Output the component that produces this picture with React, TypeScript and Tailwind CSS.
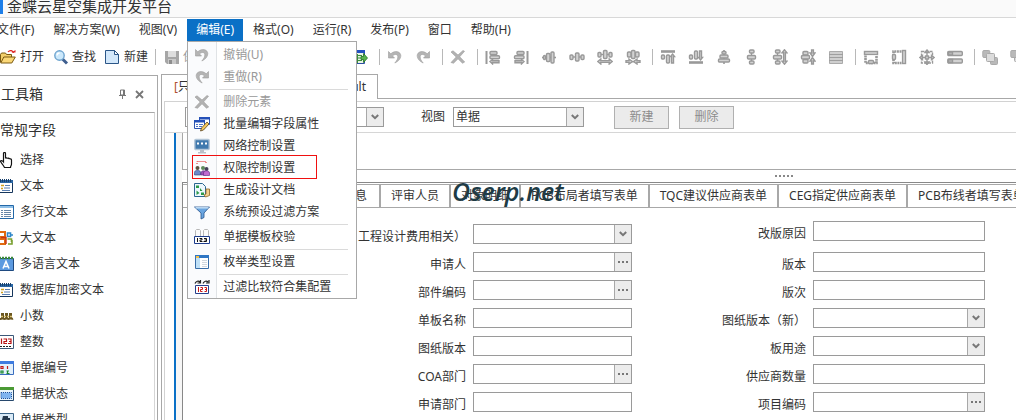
import type { ReactNode } from "react";
import clsx from "clsx";

function Svg({ children, size = 16 }: { children: ReactNode; size?: number }) {
  return (
    <svg width={size} height={size} viewBox="0 0 16 16" fill="none" className="shrink-0" aria-hidden="true">
      {children}
    </svg>
  );
}

const undoShape = (
  <g fill="#b4b4b4" stroke="#9c9c9c" strokeWidth="0.6">
    <path d="M1.500 2.500v6.500h6L5.600 7C7.500 4.800 10.600 5 10.800 7.600c.2 2.200-1 4-3 6.400 3.600-1.600 6-4.200 6-7.400C13.700 2.600 8 .8 3.800 4.800z" />
  </g>
);
const undoIcon = <Svg>{undoShape}</Svg>;
const redoIcon = (
  <Svg>
    <g transform="matrix(-1 0 0 1 16 0)">{undoShape}</g>
  </Svg>
);
const deleteIcon = (
  <Svg>
    <path d="M1 3l2-1.200L8 6l5-4.500 1.500.8L9.700 7.800l5 5.200-2.200 1.200L8 9.800 3.500 14.200 1 13.500 6.200 8z" fill="#b2b2b2" stroke="#9a9a9a" strokeWidth="0.6" />
  </Svg>
);

const openIcon = (
  <Svg>
    <path d="M.5 13.500V5.500l1-1.500h4l1 1.500h5V8" fill="#f3cf6b" stroke="#7b5a12" />
    <path d="M.8 14l3-6h11.500l-3.500 6z" fill="#fbd878" stroke="#7b5a12" />
    <path d="M8 3c2-2.500 5-1.500 5.500 1" stroke="#d22" strokeWidth="1.200" />
    <path d="M11.500 3.500h4V1z" fill="#d22" />
  </Svg>
);
const findIcon = (
  <Svg>
    <path d="M9.500 10l4.500 4.500" stroke="#3f5f8f" strokeWidth="3" />
    <circle cx="6.500" cy="6.500" r="4.700" fill="#cbe8fb" stroke="#6ea4cf" strokeWidth="1.400" />
    <path d="M4 6.500c.2-1.500 1.200-2.400 2.600-2.500" stroke="#fff" strokeWidth="1.300" />
  </Svg>
);
const newIcon = (
  <Svg>
    <path d="M1.500 1.500h9l4 4v9h-13z" fill="#d3e8fb" stroke="#2b5688" />
    <path d="M10.500 1.500v4h4z" fill="#fff" stroke="#2b5688" />
  </Svg>
);
const saveIcon = (
  <Svg>
    <path d="M1 2h14v13H3l-2-2z" fill="#a6a6a6" />
    <path d="M4 2h8v6H4z" fill="#dedede" />
    <path d="M4 10h8v5H4z" fill="#c9c9c9" />
    <path d="M5 11h3v4H5z" fill="#8e8e8e" />
  </Svg>
);
const exportIcon = (
  <Svg>
    <path d="M.5 1.500h12v13H.5z" fill="#e8f3e4" stroke="#2d4fa3" />
    <path d="M0 1h13v3H0z" fill="#2450c0" />
    <path d="M2 6.500h8M2 9h8M2 11.500h8M5.500 5v9" stroke="#3c8c3c" />
    <path d="M9 7.500h2.500V4.500l4 4.500-4 4.500v-3H9z" fill="#57b34d" stroke="#1f6e22" strokeWidth="0.8" />
  </Svg>
);

// Greyed-out layout icons share one fill and stroke
function Grey({ children }: { children: ReactNode }) {
  return (
    <Svg>
      <g fill="#d2d2d2" stroke="#999" strokeWidth="1.400">{children}</g>
    </Svg>
  );
}
const leftShape = (
  <>
    <path d="M1.500 2v13" strokeWidth="2" />
    <rect x="5" y="2.500" width="7" height="3" rx="1" />
    <rect x="5" y="6.700" width="9.500" height="3" rx="1" />
    <path d="M5 12.500l2.500-2v1.200h6.500v2H7.500v1.200z" />
  </>
);
const topShape = (
  <>
    <path d="M1 2.500h14" strokeWidth="2.600" />
    <rect x="1.500" y="6" width="3" height="4" rx="1" />
    <rect x="6.500" y="6" width="3" height="8" rx="1" />
    <path d="M12.500 5l2 2.500h-1V14h-2V7.500h-1z" />
  </>
);
const threeShape = (
  <>
    <path d="M1 5.500h14" />
    <rect x="1" y="3.500" width="3" height="4.500" rx="1" />
    <rect x="6.500" y="1.500" width="3.500" height="8" rx="1" />
    <rect x="12" y="3.500" width="3" height="4.500" rx="1" />
  </>
);
const wideShape = (
  <>
    {threeShape}
    <path d="M.8 12.500l3-2.500v1.600h8.400V10l3 2.500-3 2.500v-1.600H3.800V15z" />
  </>
);
const narrowShape = (
  <>
    <path d="M2 5.500h12" />
    <rect x="2.500" y="3" width="3.500" height="5" rx="1" />
    <rect x="6.500" y="1.500" width="3.500" height="8" rx="1" />
    <rect x="10.500" y="3" width="3.500" height="5" rx="1" />
    <path d="M7.500 12.500L4 10v1.600H1v1.800h3V15zM8.500 12.500L12 10v1.600h3v1.800h-3V15z" />
  </>
);

const alignIcons = [
  <Grey>{leftShape}</Grey>,
  <Grey><g transform="matrix(-1 0 0 1 16 0)">{leftShape}</g></Grey>,
  <Grey>
    <path d="M1 8.500h14" strokeWidth="1.600" />
    <rect x="2.500" y="6.500" width="2" height="4" rx="1" />
    <rect x="5.500" y="4.500" width="3.500" height="8" rx="1" />
    <rect x="10" y="3" width="3" height="11" rx="1" />
  </Grey>,
  <Grey><g transform="translate(0 2.500)">{threeShape}</g></Grey>,
  <Grey>{wideShape}</Grey>,
  <Grey>{narrowShape}</Grey>,
];
const spacingIcons = [
  <Grey>{topShape}</Grey>,
  <Grey><g transform="matrix(1 0 0 -1 0 16)">{topShape}</g></Grey>,
  <Grey>
    <path d="M8 1v14" strokeWidth="1.600" />
    <rect x="6" y="2.500" width="4" height="2.500" rx="1" />
    <rect x="4" y="6" width="8" height="3" rx="1" />
    <rect x="2.500" y="10" width="11" height="3" rx="1" />
  </Grey>,
  <Grey><g transform="matrix(0 1 1 0 2 0)">{threeShape}</g></Grey>,
  <Grey><g transform="matrix(0 1 1 0 0 0)">{wideShape}</g></Grey>,
  <Grey><g transform="matrix(0 1 1 0 0 0)">{narrowShape}</g></Grey>,
  <Svg>
    <path d="M1.500 2.500h13v12h-13z" fill="#cfcfcf" stroke="#ababab" />
    <path d="M1 5.500h14M1 8.500h14M1 11.500h14" stroke="#9f9f9f" />
  </Svg>,
];
const sizeIcons = [
  <Grey>
    <rect x="1.500" y="2.500" width="13" height="3" />
    <path d="M2.500 6.500v7.500h11V6.500" strokeWidth="2.600" strokeDasharray="2 .6" fill="#fff" />
    <rect x="5.500" y="11.500" width="5" height="3" rx="1" />
  </Grey>,
  <Grey>
    <rect x="11.500" y="1.500" width="3" height="13" />
    <path d="M10.500 2.500H2.500v11.500h8" strokeWidth="2.600" strokeDasharray="2 .6" fill="#fff" />
    <rect x="1.500" y="5.500" width="3" height="5" rx="1" />
  </Grey>,
  <Grey>
    <rect x="2.500" y="2.500" width="11" height="11.500" fill="#fff" strokeDasharray="3 1" />
    <path d="M8 2v13M1.500 8.500h13" />
    <rect x="6.500" y="7" width="3" height="3" />
    <path d="M8 1l2 2.500H6zM8 15.500L6 13h4zM.8 8.500L3.500 6.500v4zM15.200 8.500l-2.700-2v4z" />
  </Grey>,
  <Grey>
    <rect x=".8" y="2.500" width="14.500" height="4" rx="1" />
    <rect x=".8" y="10" width="14.500" height="4" rx="1" />
    <path d="M1.500 3h4v3h-4zM1.500 10.500h4v3h-4z" fill="#b5b5b5" />
  </Grey>,
];
const layerShape = (
  <>
    <rect x=".8" y="1.500" width="7" height="7" rx="1" fill="#b9b9b9" stroke="#aaa" />
    <rect x="8.500" y="8.500" width="7" height="7" rx="1" fill="#b9b9b9" stroke="#aaa" />
  </>
);
const layerIcons = [
  <Svg>
    {layerShape}
    <rect x="4.500" y="4.500" width="8" height="8" rx="1" fill="#dcdcdc" stroke="#aaa" />
  </Svg>,
  <Svg>
    <rect x="4.500" y="4.500" width="8" height="8" rx="1" fill="#dcdcdc" stroke="#aaa" />
    {layerShape}
  </Svg>,
];

const batchIcon = (
  <Svg>
    <path d="M5.500 1.500h10v7h-10z" fill="#fff" stroke="#2d55b0" />
    <path d="M5 1h11v2.500H5z" fill="#2450b8" />
    <path d="M.5 4.500h10v8H.5z" fill="#fff" stroke="#2d55b0" />
    <path d="M0 4h11v2.500H0z" fill="#2450b8" />
    <path d="M2 8.500h2M5 8.500h4M2 10.500h2M5 10.500h3" stroke="#4a72c8" />
    <path d="M6.500 15l1-3 5.500-6 2 2-5.500 6z" fill="#f7c95c" stroke="#5c4420" strokeWidth="0.800" />
  </Svg>
);
const networkIcon = (
  <Svg>
    <rect x=".8" y="1.500" width="14.400" height="10" rx="1" fill="#3f79ae" stroke="#b3c6d8" strokeWidth="1.400" />
    <path d="M3 5.500h2M7 5.500h2M11 5.500h2" stroke="#fff" strokeWidth="2" />
    <path d="M6 12h4v2h2v1.500H4V14h2z" fill="#b9c0c8" />
  </Svg>
);
const permissionIcon = (
  <Svg>
    <path d="M3 4V1.500h9V4" stroke="#e02020" strokeDasharray="1 1" />
    <circle cx="3.500" cy="8" r="2" fill="#5b5340" />
    <path d="M.5 15v-2.500c0-3 6-3 6 0V15z" fill="#6c88c8" stroke="#27407a" strokeWidth="0.600" />
    <circle cx="9" cy="8" r="2" fill="#5e8a5c" />
    <path d="M6.800 14c0-4 4-4 5-1.500V15h-5z" fill="#9a55b8" stroke="#5a2380" strokeWidth="0.600" />
    <circle cx="12.500" cy="9" r="2" fill="#44405a" />
    <path d="M9.500 15.500V13c0-3 6-3 6 0v2.500z" fill="#c06ad0" stroke="#5a2380" strokeWidth="0.600" />
  </Svg>
);
const docIcon = (
  <Svg>
    <path d="M.5 1.500h8l3 3v10H.5z" fill="#edf7fd" stroke="#2b6690" />
    <path d="M2 3.500h3v2.500H2zM6 6l2.500 3H6zM2.500 8.500l3 2.500-3 2zM7 10.500h3V13H7z" fill="#2c9a4a" />
    <path d="M12 7h3.500v6.500l-4 1.500-1.500-2 2-1z" fill="#f4cf8e" stroke="#8d6728" strokeWidth="0.800" />
  </Svg>
);
const filterIcon = (
  <Svg>
    <path d="M.5 3h15L10 9v4.500L7 15V9z" fill="#6aa5e0" stroke="#27538c" strokeWidth="0.800" />
    <path d="M1.500 3.800h13" stroke="#c7e0f7" strokeWidth="1.400" />
  </Svg>
);
const checkIcon = (
  <Svg>
    <path d="M1.500 8V1.500l1-1h3l1 1V8M9.500 8V1.500l1-1h3l1 1V8" fill="#fafafa" stroke="#b8b8b8" />
    <path d="M.5 7.500h15v7H.5z" fill="#fff" stroke="#1c3c8c" />
    <path d="M3.500 9v4M5.500 9.500h2.500v1.500H6v1.500h2.500M10 9.500h2.500V12.500h-3M10.500 11h2" stroke="#111" />
  </Svg>
);
const enumIcon = (
  <Svg>
    <path d="M1.500 1.500h13v13h-13z" fill="#fff" stroke="#3a6ea8" />
    <path d="M1 1h14v3H1z" fill="#2f76c4" />
    <path d="M2 2h3v2H2z" fill="#f5c04a" />
    <path d="M2 4h4v10H2z" fill="#bfe0f7" />
    <path d="M8 6.500h5M8 8.500h5M8 10.500h5M8 12.500h5" stroke="#d2d8df" />
  </Svg>
);
const compareIcon = (
  <Svg>
    <path d="M1 4.500c1-2.500 3.500-3 5-1.500M9 4.500c1-2.500 3.500-3 5-1.500M6.500 1v3h-3M15 1v3h-3" stroke="#222" strokeWidth="1.200" />
    <path d="M1.500 6.500h13v8h-13z" fill="#fff" stroke="#27408c" />
    <path d="M4.500 8v5M6.500 8.500h2v2h-2v2h2M10.500 8.500h2v4h-2M11 10.500h1" stroke="#c81818" />
  </Svg>
);

type MenuRow = { label: string; icon: ReactNode; disabled?: boolean; marked?: boolean } | null;

const editMenu: MenuRow[] = [
  { label: "撤销(U)", icon: undoIcon, disabled: true },
  { label: "重做(R)", icon: redoIcon, disabled: true },
  null,
  { label: "删除元素", icon: deleteIcon, disabled: true },
  { label: "批量编辑字段属性", icon: batchIcon },
  { label: "网络控制设置", icon: networkIcon },
  { label: "权限控制设置", icon: permissionIcon, marked: true },
  { label: "生成设计文档", icon: docIcon },
  { label: "系统预设过滤方案", icon: filterIcon },
  null,
  { label: "单据模板校验", icon: checkIcon },
  null,
  { label: "枚举类型设置", icon: enumIcon },
  null,
  { label: "过滤比较符合集配置", icon: compareIcon },
];

const notepad = (
  <>
    <path d="M.5 3.500h14v11H.5z" fill="#fff" stroke="#16365c" />
    <path d="M0 2h15v3H0z" fill="#2b67a4" />
    <path d="M.5 1v3M2.500 1v3M4.500 1v3M6.500 1v3M8.500 1v3M10.500 1v3M12.500 1v3" stroke="#173f6c" />
    <path d="M3 7.500h3M3 10.500h2" stroke="#d0a020" strokeWidth="1.400" />
    <path d="M7 7.500h5M6 10h6M4 12.500h8" stroke="#5a7fb0" />
  </>
);
const toolbox = [
  {
    label: "选择",
    icon: (
      <Svg>
        <path d="M5.500 9.500V1.500c0-1.400 2-1.400 2 0v5c0-1 2-1 2 .3 0-1 2-.9 2 .5 0-.9 2-.6 2 .7V12c0 1.500-1 2-1 3.500H6.500C5 12.500 3.500 11.500 2.500 9.500c0-1 1.500-1.500 3 .5z" fill="#fff" stroke="#111" strokeWidth="1.200" />
      </Svg>
    ),
  },
  { label: "文本", icon: <Svg>{notepad}</Svg> },
  {
    label: "多行文本",
    icon: (
      <Svg>
        <path d="M.5 1.500h15v13H.5z" fill="#fff" stroke="#2368a8" />
        <path d="M1 2h14v2H1z" fill="#8fc0e8" />
        <path d="M3 6.500h2M3 8.500h2M3 10.500h2M3 12.500h2M6 6.500h7M6 8.500h7M6 10.500h7M6 12.500h7" stroke="#6787a8" />
      </Svg>
    ),
  },
  {
    label: "大文本",
    icon: (
      <Svg>
        <path d="M1 2h6v5H1M2 9h5v5H1" stroke="#e06a10" strokeWidth="2" />
        <path d="M9.500 3h3v3.500h-3zM13 5h2" stroke="#2e86c8" strokeWidth="1.600" />
        <path d="M9.500 9h4v3M10 14h4V10" stroke="#7aa030" strokeWidth="1.600" />
        <path d="M3 7.500h5V14" stroke="#c83414" strokeWidth="1.400" />
      </Svg>
    ),
  },
  {
    label: "多语言文本",
    icon: (
      <Svg>
        <path d="M.5 2.500h15v12H.5z" fill="#5c9ae0" stroke="#1f4a80" />
        <path d="M1 2h14" stroke="#3b8a3a" strokeWidth="2.400" strokeDasharray="2 1" />
        <path d="M5 12.500l3-7 3 7M6 10.500h4" stroke="#fff" strokeWidth="1.500" />
      </Svg>
    ),
  },
  { label: "数据库加密文本", icon: <Svg>{notepad}</Svg> },
  {
    label: "小数",
    icon: (
      <Svg>
        <path d="M1 5v4.500c0 2 3 2 3 0V5M5 5v4.500c0 2 3 2 3 0V5M9 5v4.500c0 2 3 2 3 0V5M13 5v4.500c0 1 1 1.500 2 1" stroke="#6a5620" strokeWidth="2" />
        <path d="M0 8.500h15" stroke="#d8c070" strokeWidth="1.500" strokeDasharray="2 1" />
      </Svg>
    ),
  },
  {
    label: "整数",
    icon: (
      <Svg>
        <path d="M.5 1.500h15v13H.5z" fill="#fff" stroke="#3c5878" />
        <path d="M3.500 4.500v5.500M5.500 5h3v2.500h-2.500v2h3M10 5h3v4.500h-3M11 7.500h2" stroke="#b81414" strokeWidth="1.200" />
        <path d="M2 12.500h12" stroke="#222" strokeDasharray="2 1" />
      </Svg>
    ),
  },
  {
    label: "单据编号",
    icon: (
      <Svg>
        <path d="M.5 1.500h15v13H.5z" fill="#e2f0fc" stroke="#3a6ec0" />
        <path d="M0 1h16v3H0z" fill="#3d7be0" />
        <path d="M3 6.500h2v2H3zM9.500 6v3" stroke="#c01818" strokeWidth="1.200" />
        <path d="M3 11h2v2H3zM8.500 11h2.500M9.500 11v2.500M8.500 13.500h3" stroke="#1c8a2c" strokeWidth="1.200" />
      </Svg>
    ),
  },
  {
    label: "单据状态",
    icon: (
      <Svg>
        <path d="M.5 1.500h15v13H.5z" fill="#eaf5fb" stroke="#27486c" />
        <path d="M0 1h16v3H0z" fill="#4a9a34" />
        <path d="M3 6.500h10.500v6H3z" fill="#7fb4f0" stroke="#1f4f98" strokeDasharray="1 1" />
      </Svg>
    ),
  },
  {
    label: "单据类型",
    icon: (
      <Svg>
        <path d="M.5 1.500h15v13H.5z" fill="#d9eaf7" stroke="#3a6488" />
        <path d="M5 4h5v2h2v7H6V8H4z" fill="#24384c" />
      </Svg>
    ),
  },
];

const tabs = ["评审人员", "对象明细", "PCB布局者填写表单", "TQC建议供应商表单", "CEG指定供应商表单", "PCB布线者填写表单"];

type FieldDef = { label: string; kind?: "select" | "lookup" };

const leftFields: FieldDef[] = [
  { label: "工程设计费用相关）", kind: "select" },
  { label: "申请人", kind: "lookup" },
  { label: "部件编码", kind: "lookup" },
  { label: "单板名称" },
  { label: "图纸版本" },
  { label: "COA部门", kind: "lookup" },
  { label: "申请部门" },
];
const rightFields: FieldDef[] = [
  { label: "改版原因" },
  { label: "版本" },
  { label: "版次" },
  { label: "图纸版本（新）", kind: "select" },
  { label: "板用途", kind: "select" },
  { label: "供应商数量" },
  { label: "项目编码", kind: "lookup" },
];

function SelectBox({ id, value, className }: { id: string; value?: string; className?: string }) {
  return (
    <div className={clsx("relative h-5 border border-[#9a9a9a] bg-white", className)}>
      <select id={id} className="block h-full w-full appearance-none pl-0.5 outline-none">
        <option>{value}</option>
      </select>
      <span className="pointer-events-none absolute inset-y-0 right-0 flex w-[17px] items-center justify-center border-l border-[#a8a8a8] bg-[#ececec]">
        <svg width="8" height="6" viewBox="0 0 8 6" fill="none">
          <path d="M.8 1L4 4.200 7.200 1" stroke="#777" strokeWidth="2" />
        </svg>
      </span>
    </div>
  );
}

function Field({ label, kind, boxWidth }: FieldDef & { boxWidth: string }) {
  return (
    <div className="flex h-7 first:group-data-[side=right]:h-[31px]">
      <label htmlFor={label} className="flex-1 pt-[5px] text-right leading-4">{label}</label>
      <div className={clsx("ml-[7px]", boxWidth)}>
        {kind === "select" ? (
          <SelectBox id={label} />
        ) : (
          <div className="flex h-5 border border-[#9a9a9a] bg-white">
            <input id={label} type="text" className="min-w-0 flex-1 px-0.5 outline-none" />
            {kind === "lookup" && (
              <button type="button" aria-label={`选择${label}`} className="flex w-[17px] items-center justify-center gap-0.5 border-l border-[#a8a8a8] bg-[#ececec]">
                <i className="size-0.5 bg-[#777]" />
                <i className="size-0.5 bg-[#777]" />
                <i className="size-0.5 bg-[#777]" />
              </button>
            )}
          </div>
        )}
      </div>
    </div>
  );
}

function EditMenu() {
  return (
    <div role="menu" className="absolute top-full left-0 z-20 w-[170px] border border-[#a8a8a8] bg-white pt-0.5">
      <div className="absolute inset-y-0 left-0 w-[29px] border-r border-[#e0e3e6] bg-[#fafbfd]" />
      {editMenu.map((row, i) =>
        row ? (
          <button
            key={row.label}
            type="button"
            role="menuitem"
            disabled={row.disabled}
            className={clsx("relative flex h-[22px] w-full items-center gap-[13px] pl-1.5 leading-4", row.disabled ? "text-[#999]" : "text-[#333]")}
          >
            {row.icon}
            {row.label}
            {row.marked && <span className="absolute -top-0.5 left-1 h-6 w-[125px] border border-[#f01010]" />}
          </button>
        ) : (
          <div key={i} className="flex h-[3px] items-center pr-2 pl-[31px]">
            <hr className="h-px flex-1 border-0 bg-[#dadada]" />
          </div>
        )
      )}
    </div>
  );
}

const menuItem = "block h-[22px] px-[9px] leading-4 whitespace-nowrap";

function MenuBar() {
  return (
    <nav className="-ml-3 flex h-6 shrink-0 items-start gap-px pt-px">
      <button type="button" className={menuItem}>文件(F)</button>
      <button type="button" className={menuItem}>解决方案(W)</button>
      <button type="button" className={menuItem}>视图(V)</button>
      <div className="relative">
        <button type="button" className={clsx(menuItem, "bg-[#0a70c6] text-white")}>编辑(E)</button>
        <EditMenu />
      </div>
      <button type="button" className={menuItem}>格式(O)</button>
      <button type="button" className={menuItem}>运行(R)</button>
      <button type="button" className={menuItem}>发布(P)</button>
      <button type="button" className={menuItem}>窗口</button>
      <button type="button" className={menuItem}>帮助(H)</button>
    </nav>
  );
}

function Divider() {
  return <div className="flex w-[7px] shrink-0 pl-[5px]"><div className="h-4 w-px bg-[#b8b8b8]" /></div>;
}

function ToolGroup({ icons }: { icons: ReactNode[] }) {
  return (
    <>
      {icons.map((icon, i) => (
        <button key={i} type="button" disabled className="flex w-7 shrink-0 justify-center">
          {icon}
        </button>
      ))}
    </>
  );
}

function Toolbar() {
  return (
    <div className="flex h-8 shrink-0 items-center overflow-hidden pb-0.5">
      <div className="flex w-[346px] shrink-0 items-center">
        <button type="button" className="flex items-center gap-1">{openIcon}打开</button>
        <button type="button" className="ml-[9px] flex items-center gap-[3px]">{findIcon}查找</button>
        <button type="button" className="mr-0.5 ml-2 flex items-center gap-1">{newIcon}新建</button>
        <Divider />
        <button type="button" disabled className="ml-[7px] flex items-center gap-[3px] text-[#999]">{saveIcon}保存</button>
      </div>
      <ToolGroup icons={[exportIcon]} />
      <Divider />
      <ToolGroup icons={[undoIcon, redoIcon]} />
      <Divider />
      <ToolGroup icons={[deleteIcon]} />
      <Divider />
      <ToolGroup icons={alignIcons} />
      <Divider />
      <ToolGroup icons={spacingIcons} />
      <Divider />
      <ToolGroup icons={sizeIcons} />
      <Divider />
      <ToolGroup icons={layerIcons} />
    </div>
  );
}

function Toolbox() {
  return (
    <aside className="mt-px flex w-[158px] shrink-0 flex-col border-t border-r border-[#a8a8a8]">
      <header className="flex h-9 shrink-0 items-center pl-px">
        <h2 className="flex-1 text-sm">工具箱</h2>
        <button type="button" aria-label="固定">
          <svg width="9" height="10" viewBox="0 0 9 10" fill="none">
            <path d="M2.500 1h4v5h-4zM1 6.500h7M4.500 6v4" stroke="#777" />
            <path d="M5 1h2v5H5z" fill="#777" />
          </svg>
        </button>
        <button type="button" aria-label="关闭" className="mr-[13px] ml-2">
          <svg width="9" height="9" viewBox="0 0 9 9">
            <path d="M1 1l7 7M8 1L1 8" stroke="#777" strokeWidth="1.800" />
          </svg>
        </button>
      </header>
      <div className="mr-0.5 min-h-0 flex-1 overflow-hidden border-t border-r border-t-[#a8a8a8] border-r-[#d6d6d6]">
        <h3 className="flex h-[34px] items-center text-sm">常规字段</h3>
        <ul className="-ml-0.5">
          {toolbox.map((item) => (
            <li key={item.label} className="flex h-[26px] items-center gap-1.5 leading-4">
              {item.icon}
              {item.label}
            </li>
          ))}
        </ul>
      </div>
    </aside>
  );
}

function FormPanel() {
  return (
    <div className="min-h-0 flex-1 overflow-hidden border-t border-l border-[#888]">
      <div role="tablist" className="relative mt-px flex h-6 border-y border-[#a8a8a8]">
        <button type="button" role="tab" className="w-[198px] shrink-0 border-r-2 border-[#a8a8a8] pr-3 text-right">息</button>
        {tabs.map((tab) => (
          <button key={tab} type="button" role="tab" className="shrink-0 border-r-2 border-[#a8a8a8] px-[10px] leading-4 whitespace-nowrap">
            {tab}
          </button>
        ))}
        <span className="pointer-events-none absolute -top-2.5 left-[269px] font-['Open_Sans',sans-serif] text-[25px] leading-8 font-semibold text-[#203b45] italic">
          Oserp.net
        </span>
      </div>
      <form className="flex pr-[31px]">
        <div className="w-[449px] pt-4">
          {leftFields.map((f) => <Field key={f.label} {...f} boxWidth="w-[159px]" />)}
        </div>
        <div className="group flex-1 pt-[13px]" data-side="right">
          {rightFields.map((f) => <Field key={f.label} {...f} boxWidth="w-[172px]" />)}
        </div>
      </form>
    </div>
  );
}

function Designer() {
  const button = "h-[23px] w-[55px] border border-[#b0b0b0] bg-[#ebebeb] text-[#8c8c8c]";
  return (
    <main className="ml-[3px] flex min-w-0 flex-1 flex-col border-l border-[#a8a8a8]">
      <div className="flex h-[25px] shrink-0">
        <button type="button" className="flex w-[216px] items-center justify-between border-t border-r border-[#a8a8a8] pr-[11px] pl-3">
          <span><span className="text-[#b05030]">[</span>只</span>
          <span>ult</span>
        </button>
        <div className="flex-1 border-b border-[#a8a8a8]" />
      </div>
      <div className="mt-0.5 ml-0.5 flex min-h-0 flex-1 flex-col border-t border-l border-[#d2d2d2]">
        <div className="flex h-[31px] shrink-0 items-center border-b border-[#d6d6d6]">
          <SelectBox id="form-name" className="ml-5 w-[199px]" />
          <label htmlFor="view" className="ml-[37px]">视图</label>
          <SelectBox id="view" value="单据" className="ml-2 w-[131px]" />
          <button type="button" className={clsx(button, "ml-[30px]")}>新建</button>
          <button type="button" className={clsx(button, "ml-2.5")}>删除</button>
        </div>
        <div className="ml-[9px] flex min-h-0 flex-1 flex-col border-l-2 border-[#0a70c6] bg-[#f6f6f6] pl-1.5">
          <div className="h-[37px] shrink-0 border-b border-l border-[#a8a8a8] bg-white" />
          <div className="flex h-3 shrink-0 items-center gap-0.5 bg-white pl-[593px]">
            {[0, 1, 2, 3, 4].map((n) => <i key={n} className="size-0.5 bg-[#888]" />)}
          </div>
          <div className="flex min-h-0 flex-1 flex-col bg-white">
            <FormPanel />
          </div>
        </div>
      </div>
    </main>
  );
}

export default function App() {
  return (
    <div className="flex h-screen flex-col overflow-hidden bg-white font-['Noto_Sans','Noto_Sans_CJK_SC',sans-serif] text-xs text-[#333]">
      <div className="flex h-[18px] shrink-0 items-start border-b border-[#d8d8d8] bg-[#fafafa]">
        <div className="h-3.5 w-[3px] bg-[#1f7fe8]" />
        <h1 className="-mt-1 ml-1 text-[15px] leading-5">金蝶云星空集成开发平台</h1>
      </div>
      <MenuBar />
      <Toolbar />
      <div className="flex min-h-0 flex-1">
        <Toolbox />
        <Designer />
      </div>
    </div>
  );
}
